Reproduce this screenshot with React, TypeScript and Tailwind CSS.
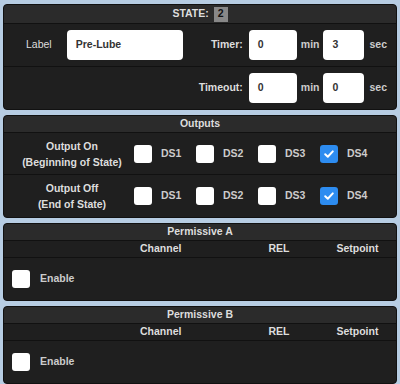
import React from "react";

const Box = ({ checked }: { checked?: boolean }) =>
  checked ? (
    <div className="w-[18px] h-[18px] rounded-[3px] bg-[#2d8cf0] flex items-center justify-center">
      <svg width="12" height="12" viewBox="0 0 12 12">
        <path d="M2.2 6.3 L4.8 8.8 L9.8 3.4" fill="none" stroke="white" strokeWidth="2" strokeLinecap="round" strokeLinejoin="round" />
      </svg>
    </div>
  ) : (
    <div className="w-[18px] h-[18px] rounded-[3px] bg-white" />
  );

const Field = ({ value, w }: { value: string; w: string }) => (
  <div className={`${w} h-[30px] rounded-[4px] bg-white flex items-center pl-[9px] text-[10.5px] font-bold text-[#333]`}>
    {value}
  </div>
);

const Header = ({ children }: { children: React.ReactNode }) => (
  <div className="h-[17px] bg-[#2b2b2b] border-b border-[#111] flex items-center justify-center text-[10.5px] font-bold text-[#ddd] rounded-t-[4px]">
    {children}
  </div>
);

const OutputRow = ({ title, sub, last }: { title: string; sub: string; last?: boolean }) => (
  <div className={`h-[42px] flex items-center ${last ? "" : "border-b border-[#111]"}`}>
    <div className="w-[130px] pl-[6px] text-center leading-[16px] text-[10.5px] font-bold text-[#ddd]">
      <div>{title}</div>
      <div>{sub}</div>
    </div>
    {["DS1", "DS2", "DS3", "DS4"].map((d, i) => (
      <div key={d} className={`flex items-center ${i === 0 ? "" : "ml-[8px]"}`}>
        <Box checked={d === "DS4"} />
        <span className="ml-[9px] w-[27px] text-[10.5px] font-bold text-[#ccc]">{d}</span>
      </div>
    ))}
  </div>
);

const Permissive = ({ name }: { name: string }) => (
  <div className="bg-[#1f1f1f] rounded-[4px] border border-[#111]">
    <Header>{name}</Header>
    <div className="h-[17px] border-b border-[#111] flex items-center text-[10.5px] font-bold text-[#ddd]">
      <span className="ml-[136px]">Channel</span>
      <span className="ml-[87px]">REL</span>
      <span className="ml-[47px]">Setpoint</span>
    </div>
    <div className="h-[42px] flex items-center pl-[8px]">
      <Box />
      <span className="ml-[10px] text-[10.5px] font-bold text-[#ccc]">Enable</span>
    </div>
  </div>
);

const TimeRow = ({ label, min, sec }: { label: string; min: string; sec: string }) => (
  <>
    <span className="ml-auto text-[10.5px] font-bold text-[#ddd]">{label}</span>
    <div className="ml-[6px]"><Field value={min} w="w-[48px]" /></div>
    <span className="ml-[4px] text-[10.5px] font-bold text-[#ccc]">min</span>
    <div className="ml-[4px]"><Field value={sec} w="w-[41px]" /></div>
    <span className="ml-[5px] mr-[9px] text-[10.5px] font-bold text-[#ccc]">sec</span>
  </>
);

export default function App() {
  return (
    <div className="w-[400px] h-[384px] bg-[#b7cde3] px-[3px] pt-[4px] flex flex-col gap-[5px] font-['Liberation_Sans',Arial,sans-serif] overflow-hidden">
      <div className="bg-[#1f1f1f] rounded-[4px] border border-[#111]">
        <div className="h-[19px] bg-[#2b2b2b] border-b border-[#111] flex items-center justify-center text-[10.5px] font-bold text-[#ddd] rounded-t-[4px]">
          STATE:
          <span className="ml-[5px] bg-[#888] text-[#111] px-[4px] h-[15px] flex items-center">2</span>
        </div>
        <div className="h-[43px] flex items-center border-b border-[#111]">
          <span className="ml-[22px] text-[10.5px] text-[#ddd]">Label</span>
          <div className="ml-[15px]"><Field value="Pre-Lube" w="w-[116px]" /></div>
          <TimeRow label="Timer:" min="0" sec="3" />
        </div>
        <div className="h-[42px] flex items-center">
          <TimeRow label="Timeout:" min="0" sec="0" />
        </div>
      </div>
      <div className="bg-[#1f1f1f] rounded-[4px] border border-[#111]">
        <Header>Outputs</Header>
        <OutputRow title="Output On" sub="(Beginning of State)" />
        <OutputRow title="Output Off" sub="(End of State)" last />
      </div>
      <Permissive name="Permissive A" />
      <Permissive name="Permissive B" />
    </div>
  );
}
